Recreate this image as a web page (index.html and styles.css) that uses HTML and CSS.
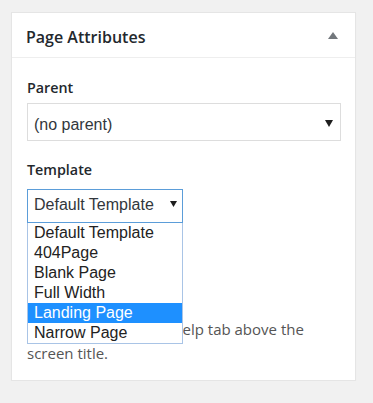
FILE: index.html
```html
<!DOCTYPE html>
<html lang="en">
<head>
<meta charset="utf-8">
<title>Page Attributes</title>
<link rel="stylesheet" href="styles.css">
</head>
<body>
<div class="postbox">
  <div class="postbox-header">
    <h2 class="hndle">Page Attributes</h2>
    <svg class="toggle" width="10" height="7" viewBox="0 0 10 7"><polygon points="0,7 5,0 10,7"/></svg>
  </div>
  <div class="inside">
    <p class="label label-parent">Parent</p>
    <div class="select select-parent">
      <span class="select-text">(no parent)</span>
      <svg class="arrow arrow-parent" width="8" height="7" viewBox="0 0 8 7"><polygon points="0,0 8,0 4,7"/></svg>
    </div>
    <p class="label label-template">Template</p>
    <div class="template-wrap">
      <div class="select select-template">
        <span class="select-text">Default Template</span>
        <svg class="arrow arrow-template" width="7" height="6" viewBox="0 0 7 6"><polygon points="0,0 7,0 3.5,6"/></svg>
      </div>
      <ul class="dropdown">
        <li class="option">Default Template</li>
        <li class="option">404Page</li>
        <li class="option">Blank Page</li>
        <li class="option">Full Width</li>
        <li class="option selected">Landing Page</li>
        <li class="option">Narrow Page</li>
      </ul>
    </div>
    <p class="help"><span class="hidden-part">Need help? Use the H</span>elp tab above the screen title.</p>
  </div>
</div>
</body>
</html>
```
FILE: styles.css
```css
* { box-sizing: border-box; }

body {
  margin: 0;
  background: #f1f1f1;
  font-family: "Open Sans", "Noto Sans", sans-serif;
  color: #444;
}

.postbox {
  width: 345px;
  margin: 12px 0 0 11px;
  background: #fff;
  border: 1px solid #e5e5e5;
  box-shadow: 0 1px 1px rgba(0, 0, 0, 0.04);
}

.postbox-header {
  display: flex;
  justify-content: space-between;
  align-items: flex-start;
  height: 45px;
  padding: 14px 17px 0 14px;
  border-bottom: 1px solid #eeeeee;
}

.hndle {
  margin: 0;
  font-size: 16px;
  line-height: 20px;
  font-weight: 600;
  color: #23282d;
}

.toggle {
  margin-top: 5px;
  fill: #72777c;
}

.inside {
  padding: 0 14px 15px 15px;
}

.label {
  margin: 0;
  font-size: 14.3px;
  line-height: 20px;
  font-weight: 600;
  color: #23282d;
}

.label-parent { margin-top: 20px; }
.label-template { margin-top: 19px; }

.select {
  display: flex;
  justify-content: space-between;
  align-items: flex-start;
  background: #fff;
  font-family: "Liberation Sans", Arial, sans-serif;
  font-size: 16px;
  line-height: 18px;
  color: #32373c;
}

.select-parent {
  height: 38px;
  margin-top: 5px;
  padding: 12px 7px 0 6px;
  border: 1px solid #dddddd;
}

.arrow-parent { margin-top: 4px; fill: #1e1e1e; }

.template-wrap {
  position: relative;
  width: 156px;
  margin-top: 9px;
}

.select-template {
  height: 34px;
  padding: 6px 5px 0 6px;
  border: 1px solid #5b9dd9;
}

.arrow-template { margin-top: 5px; fill: #1e1e1e; }

.dropdown {
  position: absolute;
  top: 100%;
  left: 0;
  width: 156px;
  margin: 0;
  padding: 0;
  list-style: none;
  background: #fff;
  border: 1px solid #a9c4e6;
  border-top: 0;
  font-family: "Liberation Sans", Arial, sans-serif;
  font-size: 16px;
}

.option {
  height: 20px;
  line-height: 19px;
  padding-left: 6px;
  color: #222;
  white-space: nowrap;
}

.option.selected {
  background: #1e90ff;
  color: #fff;
}

.help {
  margin: 94px 0 0;
  font-size: 15px;
  line-height: 24px;
  color: #555;
}

.hidden-part { letter-spacing: 0.25px; }
```
